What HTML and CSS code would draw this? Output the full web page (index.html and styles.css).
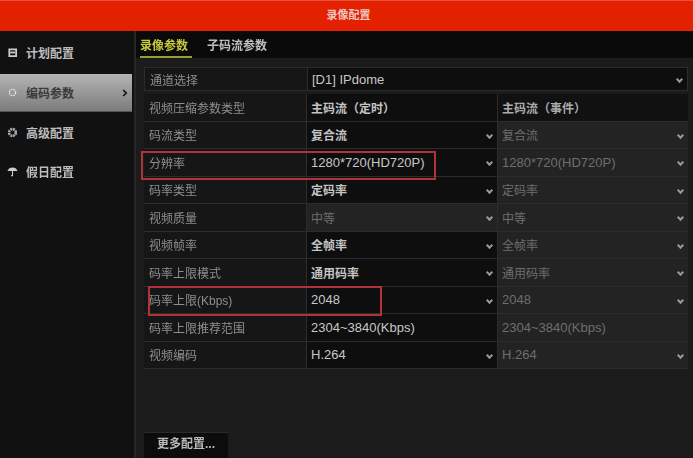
FILE: index.html
```html
<html>
<head>
	<meta charset="utf-8">
	<link rel="stylesheet" href="styles.css">
</head>
<body>
	<div class="title">录像配置</div>
	<div class="content">
		<div class="side">
			<div class="item">
				<svg class="ico" viewBox="0 0 12 12"><path d="M2.500 2.500h7.500v7.500h-7.500z" fill="none" stroke="#ccc" stroke-width="1.900"/><path d="M3.500 5h5.500v2h-5.500z" fill="#ccc"/></svg>
				<span>计划配置</span>
			</div>
			<div class="item on">
				<svg class="ico" viewBox="0 0 12 12"><circle cx="6" cy="6" r="3.400" fill="none" stroke="#ddd" stroke-width="1.500" stroke-dasharray="2 .7"/></svg>
				<span>编码参数</span>
				<svg class="arrow" viewBox="0 0 6 8"><path d="M1.200 1l3 3-3 3" fill="none" stroke="#111" stroke-width="1.700"/></svg>
			</div>
			<div class="item">
				<svg class="ico" viewBox="0 0 12 12"><circle cx="6" cy="6" r="3.700" fill="none" stroke="#aaa" stroke-width="2.800" stroke-dasharray="2.200 .7"/></svg>
				<span>高级配置</span>
			</div>
			<div class="item">
				<svg class="ico" viewBox="0 0 12 12"><path d="M.5 5.500C1.500 2.500 3.500 1.500 6 1.500s4.500 1 5.500 4z" fill="#ccc"/><path d="M6 5v5.500H4.500" fill="none" stroke="#ccc" stroke-width="1.200"/></svg>
				<span>假日配置</span>
			</div>
		</div>
		<div class="main">
			<div class="tabs">
				<div class="tab on">录像参数</div>
				<div class="tab">子码流参数</div>
			</div>
			<div class="body">
				<div class="form">
					<div class="row first">
						<div class="lab">通道选择</div>
						<div class="val wide num">[D1] IPdome<i></i></div>
					</div>
					<div class="row">
						<div class="lab">视频压缩参数类型</div>
						<div class="val">主码流（定时）</div>
						<div class="val off head">主码流（事件）</div>
					</div>
					<div class="row">
						<div class="lab">码流类型</div>
						<div class="val">复合流<i></i></div>
						<div class="val off">复合流<i></i></div>
					</div>
					<div class="row">
						<div class="lab">分辨率</div>
						<div class="val num">1280*720(HD720P)<i></i></div>
						<div class="val off num">1280*720(HD720P)<i></i></div>
					</div>
					<div class="row">
						<div class="lab">码率类型</div>
						<div class="val">定码率<i></i></div>
						<div class="val off">定码率<i></i></div>
					</div>
					<div class="row">
						<div class="lab">视频质量</div>
						<div class="val off">中等<i></i></div>
						<div class="val off">中等<i></i></div>
					</div>
					<div class="row">
						<div class="lab">视频帧率</div>
						<div class="val">全帧率<i></i></div>
						<div class="val off">全帧率<i></i></div>
					</div>
					<div class="row">
						<div class="lab">码率上限模式</div>
						<div class="val">通用码率<i></i></div>
						<div class="val off">通用码率<i></i></div>
					</div>
					<div class="row">
						<div class="lab">码率上限(Kbps)</div>
						<div class="val num">2048<i></i></div>
						<div class="val off num">2048<i></i></div>
					</div>
					<div class="row">
						<div class="lab">码率上限推荐范围</div>
						<div class="val num">2304~3840(Kbps)</div>
						<div class="val off num">2304~3840(Kbps)</div>
					</div>
					<div class="row">
						<div class="lab">视频编码</div>
						<div class="val num">H.264<i></i></div>
						<div class="val off num">H.264<i></i></div>
					</div>
					<div class="mark mark1"></div>
					<div class="mark mark2"></div>
				</div>
				<div class="more">更多配置...</div>
			</div>
		</div>
	</div>
</body>
</html>
```

FILE: styles.css
```css
html, body {
	margin: 0;
	height: 100%;
	overflow: hidden;
}

body {
	width: 693px;
	height: 458px;
	display: flex;
	flex-direction: column;
	background-color: #1b1b1b;
	color: #aaa;
	font-family: 'Liberation Sans', 'Noto Sans CJK SC', sans-serif;
	font-size: 12px;
	filter: blur(.6px);
}

.title {
	height: 31px;
	line-height: 28px;
	flex: none;
	padding-left: 4px;
	text-align: center;
	background-color: #e32000;
	border-top: 1px solid #e8523c;
	box-sizing: border-box;
	color: #eec8c0;
	font-size: 11px;
	font-weight: bold;
}

.content {
	flex: 1;
	display: flex;
	min-height: 0;
}

.side {
	width: 134px;
	flex: none;
	padding-top: 2px;
	background-color: #111;
	border-right: 2px solid #262626;
}

.item {
	height: 39px;
	display: flex;
	align-items: center;
	padding-left: 7px;
	color: #bdbdbd;
	font-weight: bold;
}

.item.on {
	width: 125px;
	height: 37px;
	margin: 2px 0 1px;
	background: linear-gradient(#b4b4b4, #7c7c7c);
	border-bottom: 1px solid #555;
	color: #3a3a3a;
}

.ico {
	width: 11px;
	height: 11px;
	margin-right: 8px;
}

.arrow {
	width: 6px;
	height: 8px;
	margin-left: auto;
	margin-right: 4px;
}

.main {
	flex: 1;
	display: flex;
	flex-direction: column;
	min-width: 0;
}

.tabs {
	height: 27px;
	flex: none;
	display: flex;
	gap: 15px;
	padding-left: 4px;
	background-color: #0a0a0a;
	color: #c0c0c0;
	font-weight: bold;
}

.tab {
	height: 26px;
	line-height: 31px;
}

.tab.on {
	width: 52px;
	color: #c9c93c;
	border-bottom: 2px solid #9c9c30;
	height: 25px;
}

.body {
	flex: 1;
	padding: 9px 5px 0 8px;
	display: flex;
	flex-direction: column;
}

.form {
	position: relative;
}

.row {
	height: 27.5px;
	display: flex;
	border-bottom: 1px solid #2c2c2c;
	box-sizing: border-box;
}

.row.first {
	height: 24px;
	margin-bottom: 3px;
	border: 1px solid #2c2c2c;
}

.lab {
	width: 162px;
	flex: none;
	padding-left: 5px;
	box-sizing: border-box;
	display: flex;
	align-items: center;
	background-color: #161616;
	color: #8e8e8e;
}

.val {
	width: 191px;
	flex: none;
	position: relative;
	padding-left: 4px;
	box-sizing: border-box;
	display: flex;
	align-items: center;
	background-color: #0e0e0e;
	border-left: 1px solid #2c2c2c;
	color: #c4c4c4;
	font-weight: bold;
}

.val.num {
	font-size: 13px;
	font-weight: normal;
	color: #c8c8c8;
}

.val.wide {
	width: auto;
	flex: 1;
}

.val.off {
	background-color: #232323;
	color: #6e6e6e;
	font-weight: normal;
}

.val.off.head {
	background-color: #111;
	color: #aaa;
	font-weight: bold;
}

/* little dropdown caret */
.val i {
	position: absolute;
	right: 5px;
	top: 50%;
	width: 3px;
	height: 3px;
	margin-top: -2px;
	border-right: 2px solid #999;
	border-bottom: 2px solid #999;
	transform: rotate(45deg);
}

.mark {
	position: absolute;
	border: 2px solid #b0323a;
	box-sizing: border-box;
}

.mark1 {
	left: -3px;
	top: 84px;
	width: 295px;
	height: 29px;
}

.mark2 {
	left: 4px;
	top: 219px;
	width: 234px;
	height: 30px;
}

.more {
	width: 84px;
	height: 26px;
	line-height: 22px;
	margin-top: auto;
	text-align: center;
	background-color: #0c0c0c;
	border-top: 1px solid #2a2a2a;
	box-sizing: border-box;
	color: #bbb;
	font-weight: bold;
}
```
